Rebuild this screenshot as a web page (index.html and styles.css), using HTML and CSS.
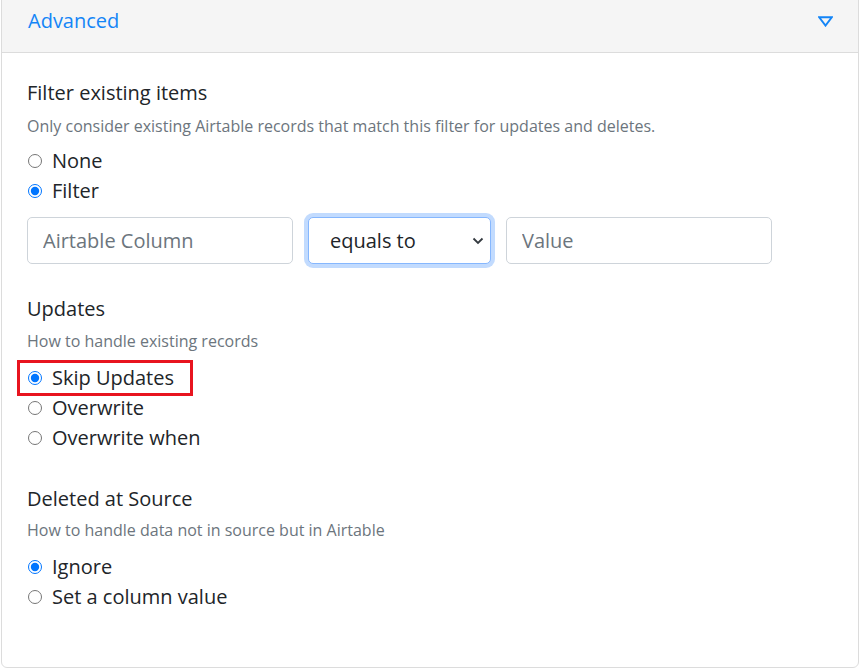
FILE: index.html
```html
<!DOCTYPE html>
<html>
<head>
<meta charset="utf-8">
<link rel="stylesheet" href="styles.css">
</head>
<body>
<div class="card">
  <div class="card-header">
    <span class="title">Advanced</span>
    <svg class="caret" width="15" height="11" viewBox="0 0 15 11"><path d="M1.2 1.2 H13.8 L7.5 9.6 Z" fill="none" stroke="#1485f7" stroke-width="1.9" stroke-linejoin="miter"/></svg>
  </div>
  <div class="card-body">
    <section class="group g1">
      <div class="heading">Filter existing items</div>
      <div class="desc">Only consider existing Airtable records that match this filter for updates and deletes.</div>
      <div class="options">
        <label class="opt"><input type="radio" name="f"> None</label>
        <label class="opt"><input type="radio" name="f" checked> Filter</label>
      </div>
      <div class="filter-row">
        <input class="field" type="text" placeholder="Airtable Column">
        <div class="select-wrap">
          <select class="field select"><option>equals to</option></select>
          <svg class="chev" width="12" height="8" viewBox="0 0 12 8"><path d="M1.5 1.5 L6 6 L10.5 1.5" fill="none" stroke="#343a40" stroke-width="1.8"/></svg>
        </div>
        <input class="field" type="text" placeholder="Value">
      </div>
    </section>
    <section class="group g2">
      <div class="heading">Updates</div>
      <div class="desc">How to handle existing records</div>
      <div class="options">
        <label class="opt highlight"><input type="radio" name="u" checked> Skip Updates</label>
        <label class="opt"><input type="radio" name="u"> Overwrite</label>
        <label class="opt"><input type="radio" name="u"> Overwrite when</label>
      </div>
    </section>
    <section class="group g3">
      <div class="heading">Deleted at Source</div>
      <div class="desc">How to handle data not in source but in Airtable</div>
      <div class="options">
        <label class="opt"><input type="radio" name="d" checked> Ignore</label>
        <label class="opt"><input type="radio" name="d"> Set a column value</label>
      </div>
    </section>
  </div>
</div>
</body>
</html>
```
FILE: styles.css
```css
html, body {
  margin: 0;
  padding: 0;
  background: #fff;
}
body {
  font-family: "Open Sans", "Noto Sans", sans-serif;
  color: #212529;
  font-size: 20px;
}
.card {
  margin: -1px 2px 0 1px;
  border: 1px solid #dcdcdc;
  border-radius: 0 0 6px 6px;
  height: 669px;
  box-sizing: border-box;
  display: flex;
  flex-direction: column;
}
.card-header {
  height: 53px;
  box-sizing: border-box;
  background: #f5f5f5;
  border-bottom: 1px solid #dcdcdc;
  display: flex;
  align-items: center;
  justify-content: space-between;
  padding: 0 25px 0 26px;
}
.title {
  color: #1485f7;
  font-size: 20px;
  line-height: 30px;
  margin-top: -10px;
}
.caret {
  margin-top: -9px;
}
.card-body {
  padding: 25px 25px 0 25px;
}
.group + .group {
  margin-top: 30px;
}
.g3 {
  margin-top: 31px !important;
}
.heading {
  font-size: 20px;
  line-height: 30px;
  color: #212529;
}
.desc {
  font-size: 16px;
  line-height: 22px;
  color: #6c757d;
  margin-top: 6px;
}
.g1 .desc {
  margin-top: 7px;
}
.g3 .desc {
  margin-top: 5px;
}
.options {
  margin-top: 11px;
  display: flex;
  flex-direction: column;
}
.g1 .options {
  margin-top: 9px;
}
.opt {
  display: flex;
  align-items: center;
  font-size: 20px;
  line-height: 30px;
  height: 30px;
  color: #212529;
  align-self: flex-start;
  box-sizing: border-box;
}
.opt input {
  margin: 0 10px 0 1px;
  width: 14px;
  height: 14px;
}
.opt.highlight {
  outline: 3px solid #e8141f;
  outline-offset: 0;
  padding: 0 16px 0 7px;
  margin-left: -7px;
}
.filter-row {
  margin-top: 11px;
  display: flex;
  gap: 15px;
}
.field {
  box-sizing: border-box;
  width: 266px;
  height: 47px;
  border: 1px solid #ced4da;
  border-radius: 5px;
  padding: 0 15px;
  font-family: "Open Sans", "Noto Sans", sans-serif;
  font-size: 20px;
  color: #212529;
  background: #fff;
  outline: none;
}
.field::placeholder {
  color: #6c757d;
}
.select-wrap {
  position: relative;
  width: 183px;
}
.select {
  width: 183px;
  appearance: none;
  -webkit-appearance: none;
  padding: 0 21px;
  border-color: #86b7fe;
  box-shadow: 0 0 0 4px rgba(13, 110, 253, 0.25);
}
.chev {
  position: absolute;
  right: 7px;
  top: 20px;
}
```
